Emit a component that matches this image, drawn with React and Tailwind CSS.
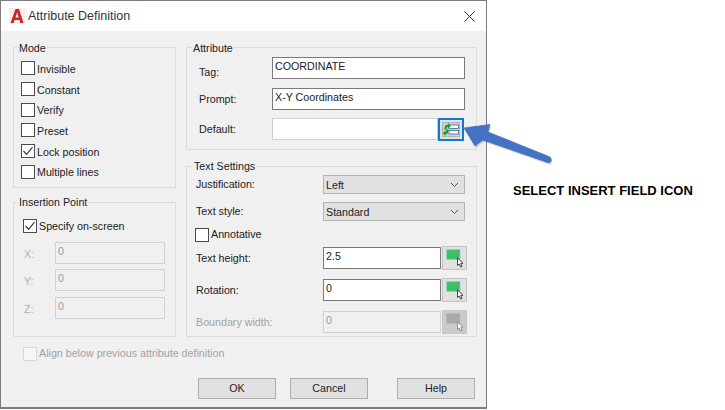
function Check({ checked, disabled }) {
  return (
    <span className={`flex h-[14px] w-[14px] shrink-0 items-center justify-center border ${disabled ? "border-[#d8d8d8] bg-[#f6f6f6]" : "border-[#4a4a4a] bg-white"}`}>
      {checked && (
        <svg width="12" height="12" viewBox="0 0 12 12" fill="none">
          <path d="M1.5 6 L4.6 9.3 L10.5 2.2" stroke="#333" strokeWidth="1.1" />
        </svg>
      )}
    </span>
  );
}

function CheckRow({ label, checked, disabled, className = "", labelClass = "" }) {
  return (
    <div className={`flex items-center gap-[2px] ${className}`}>
      <Check checked={checked} disabled={disabled} />
      <span className={`${labelClass} ${disabled ? "text-[#a3a3a3]" : ""}`}>{label}</span>
    </div>
  );
}

function Group({ title, className = "", titleClass = "", children }) {
  return (
    <div className={`relative border border-[#dcdcdc] ${className}`}>
      <span className={`absolute bg-[#f0f0f0] px-[1px] leading-[14px] ${titleClass}`}>{title}</span>
      {children}
    </div>
  );
}

function Field({ value, className = "", disabled, active }) {
  return (
    <div
      className={`border px-[2px] pt-[1px] leading-[14px] ${
        disabled
          ? "border-[#d2d2d2] bg-[#f0f0f0] text-[#9a9a9a]"
          : active
          ? "border-[#7a7a7a] bg-white"
          : "border-[#a0a0a0] bg-white"
      } ${className}`}
    >
      {value}
    </div>
  );
}

function Select({ value }) {
  return (
    <div className="flex h-[19px] w-[142px] items-center justify-between border border-[#b4b4b4] bg-[#e1e1e1] pl-[2px] pr-[5px]">
      <span className="pt-[1px]">{value}</span>
      <svg width="9" height="6" viewBox="0 0 9 6" fill="none">
        <path d="M1 1 L4.5 4.5 L8 1" stroke="#555" strokeWidth="1" />
      </svg>
    </div>
  );
}

function PickButton({ disabled }) {
  const c = disabled ? "#a9a9a9" : "#3fbf6b";
  return (
    <div className={`ml-[1px] flex h-full w-[25px] items-center justify-center border ${disabled ? "border-[#c8c8c8] bg-[#cbcbcb]" : "border-[#c2c2c2] bg-[#e1e1e1]"}`}>
      <svg width="23" height="22" viewBox="0 0 23 22">
        <rect x="3.5" y="2.5" width="13.5" height="10" fill={c} stroke={disabled ? "#bbb" : "#8fd8a8"} strokeDasharray="1.5 1" />
        <path d="M14.5 11 V18.5 L16.2 17 L17.6 20 L19 19.4 L17.7 16.5 L20 16.2 Z" fill="#fff" stroke={disabled ? "#888" : "#333"} strokeWidth="0.9" />
      </svg>
    </div>
  );
}

function Btn({ label }) {
  return (
    <div className="flex h-[21px] w-[78px] items-center justify-center border border-[#adadad] bg-[#e1e1e1]">{label}</div>
  );
}

function TextRow({ label, children, disabled, h = "h-[24px]" }) {
  return (
    <div className={`flex items-center ${h}`}>
      <span className={`w-[127px] ${disabled ? "text-[#a3a3a3]" : ""}`}>{label}</span>
      {children}
    </div>
  );
}

function CoordRow({ label, className = "" }) {
  return (
    <div className={`flex items-center ${className}`}>
      <span className="w-[32px] pl-[1px] pt-[3px] text-[#b0b0b0]">{label}</span>
      <Field value="0" disabled className="h-[22px] w-[110px]" />
    </div>
  );
}

export default function App() {
  return (
    <div className="relative flex h-[410px] w-[725px] bg-white font-['Liberation_Sans',Arial,sans-serif] text-[10.7px] text-[#222]">
      <div className="h-[409px] w-[487px] shrink-0 border border-b-2 border-[#7d7d7d] bg-[#f0f0f0]">
        <div className="flex h-[30px] items-center bg-white pl-[8px] pr-[11px]">
          <svg width="16" height="16" viewBox="0 0 16 16">
            <rect width="16" height="16" fill="#f9ece9" />
            <path d="M1.5 15 L6.5 1 H10 L14.5 15 H11.4 L10.5 12 H5.6 L4.6 15 Z M6.5 9.5 H9.7 L8.1 4.5 Z" fill="#c9252b" fillRule="evenodd" />
          </svg>
          <span className="ml-[3px] text-[12.5px] text-[#333]">Attribute Definition</span>
          <svg className="ml-auto" width="11" height="11" viewBox="0 0 11 11" fill="none">
            <path d="M0.5 0.5 L10.5 10.5 M10.5 0.5 L0.5 10.5" stroke="#333" strokeWidth="1" />
          </svg>
        </div>

        <div className="pl-[12px] pr-[9px] pt-[16px]">
          <div className="flex gap-[10px]">
            <div className="w-[163px] shrink-0">
              <Group title="Mode" className="h-[141px] pl-[7px] pt-[10px]" titleClass="left-[4px] top-[-7px]">
                {[
                  ["Invisible"],
                  ["Constant"],
                  ["Verify"],
                  ["Preset"],
                  ["Lock position", true],
                  ["Multiple lines"],
                ].map(([l, c]) => (
                  <CheckRow key={l} label={l} checked={c} className="h-[20.7px]" labelClass="pt-[1px]" />
                ))}
              </Group>
              <Group title="Insertion Point" className="mt-[14px] h-[135px] pl-[9px] pt-[16px]" titleClass="left-[4px] top-[-8px]">
                <CheckRow label="Specify on-screen" checked className="h-[14px]" />
                <CoordRow label="X:" className="mt-[9px]" />
                <CoordRow label="Y:" className="mt-[5px]" />
                <CoordRow label="Z:" className="mt-[6px]" />
              </Group>
            </div>

            <div className="w-[291px] shrink-0">
              <Group title="Attribute" className="h-[103px] pl-[12px] pt-[9px]" titleClass="left-[5px] top-[-7px]">
                <div className="flex h-[22px]">
                  <span className="w-[73px] pt-[8px] leading-[14px]">Tag:</span>
                  <Field value="COORDINATE" active className="w-[193px]" />
                </div>
                <div className="mt-[9px] flex h-[22px]">
                  <span className="w-[73px] pt-[4px] leading-[14px]">Prompt:</span>
                  <Field value="X-Y Coordinates" active className="w-[193px]" />
                </div>
                <div className="mt-[8px] flex h-[22px]">
                  <span className="w-[73px] pt-[4px] leading-[14px]">Default:</span>
                  <Field value="" className="w-[166px] border-[#d0d0d0]" />
                  <div className="flex h-[23px] w-[26px] items-center justify-center border-2 border-[#0f78d4] bg-[#e1e1e1]">
                    <svg width="18" height="15" viewBox="0 0 18 15">
                      <rect x="0.5" y="0.5" width="17" height="14" fill="#cfcfcf" stroke="#8a8a8a" strokeDasharray="1 1" />
                      <rect x="7" y="3" width="9.5" height="3.5" fill="#fff" stroke="#3a6ea5" strokeWidth="0.8" />
                      <rect x="7" y="8.5" width="9.5" height="3.5" fill="#fff" stroke="#3a6ea5" strokeWidth="0.8" />
                      <path d="M2.5 7.5 C2.5 4 3.5 2.8 6 2.8 L6 1 L9 3.7 L6 6.4 L6 4.8 C5 4.8 4.8 5.8 4.8 7.5 Z" fill="#14a02a" />
                      <path d="M6.5 7.5 C6.5 11 5.5 12.2 3.5 12.2 L3.5 14 L0.8 11.3 L3.5 8.6 L3.5 10.2 C4 10.2 4.2 9.2 4.2 7.5 Z" fill="#14a02a" />
                    </svg>
                  </div>
                </div>
              </Group>

              <Group title="Text Settings" className="mt-[16px] h-[171px] pl-[9px] pt-[8px]" titleClass="left-[6px] top-[-8px]">
                <TextRow label="Justification:" h="h-[19px]"><Select value="Left" /></TextRow>
                <TextRow label="Text style:" h="mt-[8px] h-[19px]"><Select value="Standard" /></TextRow>
                <CheckRow label="Annotative" className="-ml-[1px] mt-[7px] h-[13px]" />
                <TextRow label="Text height:" h="mt-[5px] h-[24px]">
                  <Field value="2.5" active className="h-[22px] w-[118px]" />
                  <PickButton />
                </TextRow>
                <TextRow label="Rotation:" h="mt-[8px] h-[24px]">
                  <Field value="0" active className="h-[22px] w-[118px]" />
                  <PickButton />
                </TextRow>
                <TextRow label="Boundary width:" disabled h="mt-[8px] h-[24px]">
                  <Field value="0" disabled className="h-[22px] w-[118px]" />
                  <PickButton disabled />
                </TextRow>
              </Group>
            </div>
          </div>

          <CheckRow label="Align below previous attribute definition" disabled className="ml-[10px] mt-[10px] h-[13px]" />

          <div className="mr-[2px] mt-[18px] flex justify-end">
            <Btn label="OK" />
            <div className="ml-[14px]"><Btn label="Cancel" /></div>
            <div className="ml-[29px]"><Btn label="Help" /></div>
          </div>
        </div>
      </div>

      <div className="pl-[26px] pt-[181px]">
        <span className="whitespace-nowrap text-[13px] font-bold text-black">SELECT INSERT FIELD ICON</span>
      </div>

      <svg className="absolute left-0 top-0 pointer-events-none" width="725" height="410" viewBox="0 0 725 410">
        <path d="M464 128 L490 124.5 L488 132 L550 157 Q553 161 549 163 L483 140 L475 146 Z" fill="#000" opacity="0.13" transform="translate(1 2)" />
        <path d="M464 128 L490 124.5 L488 132 L550 157 Q553 161 549 163 L483 140 L475 146 Z" fill="#4472c4" stroke="#4472c4" strokeWidth="0.8" strokeLinejoin="round" />
      </svg>
    </div>
  );
}
